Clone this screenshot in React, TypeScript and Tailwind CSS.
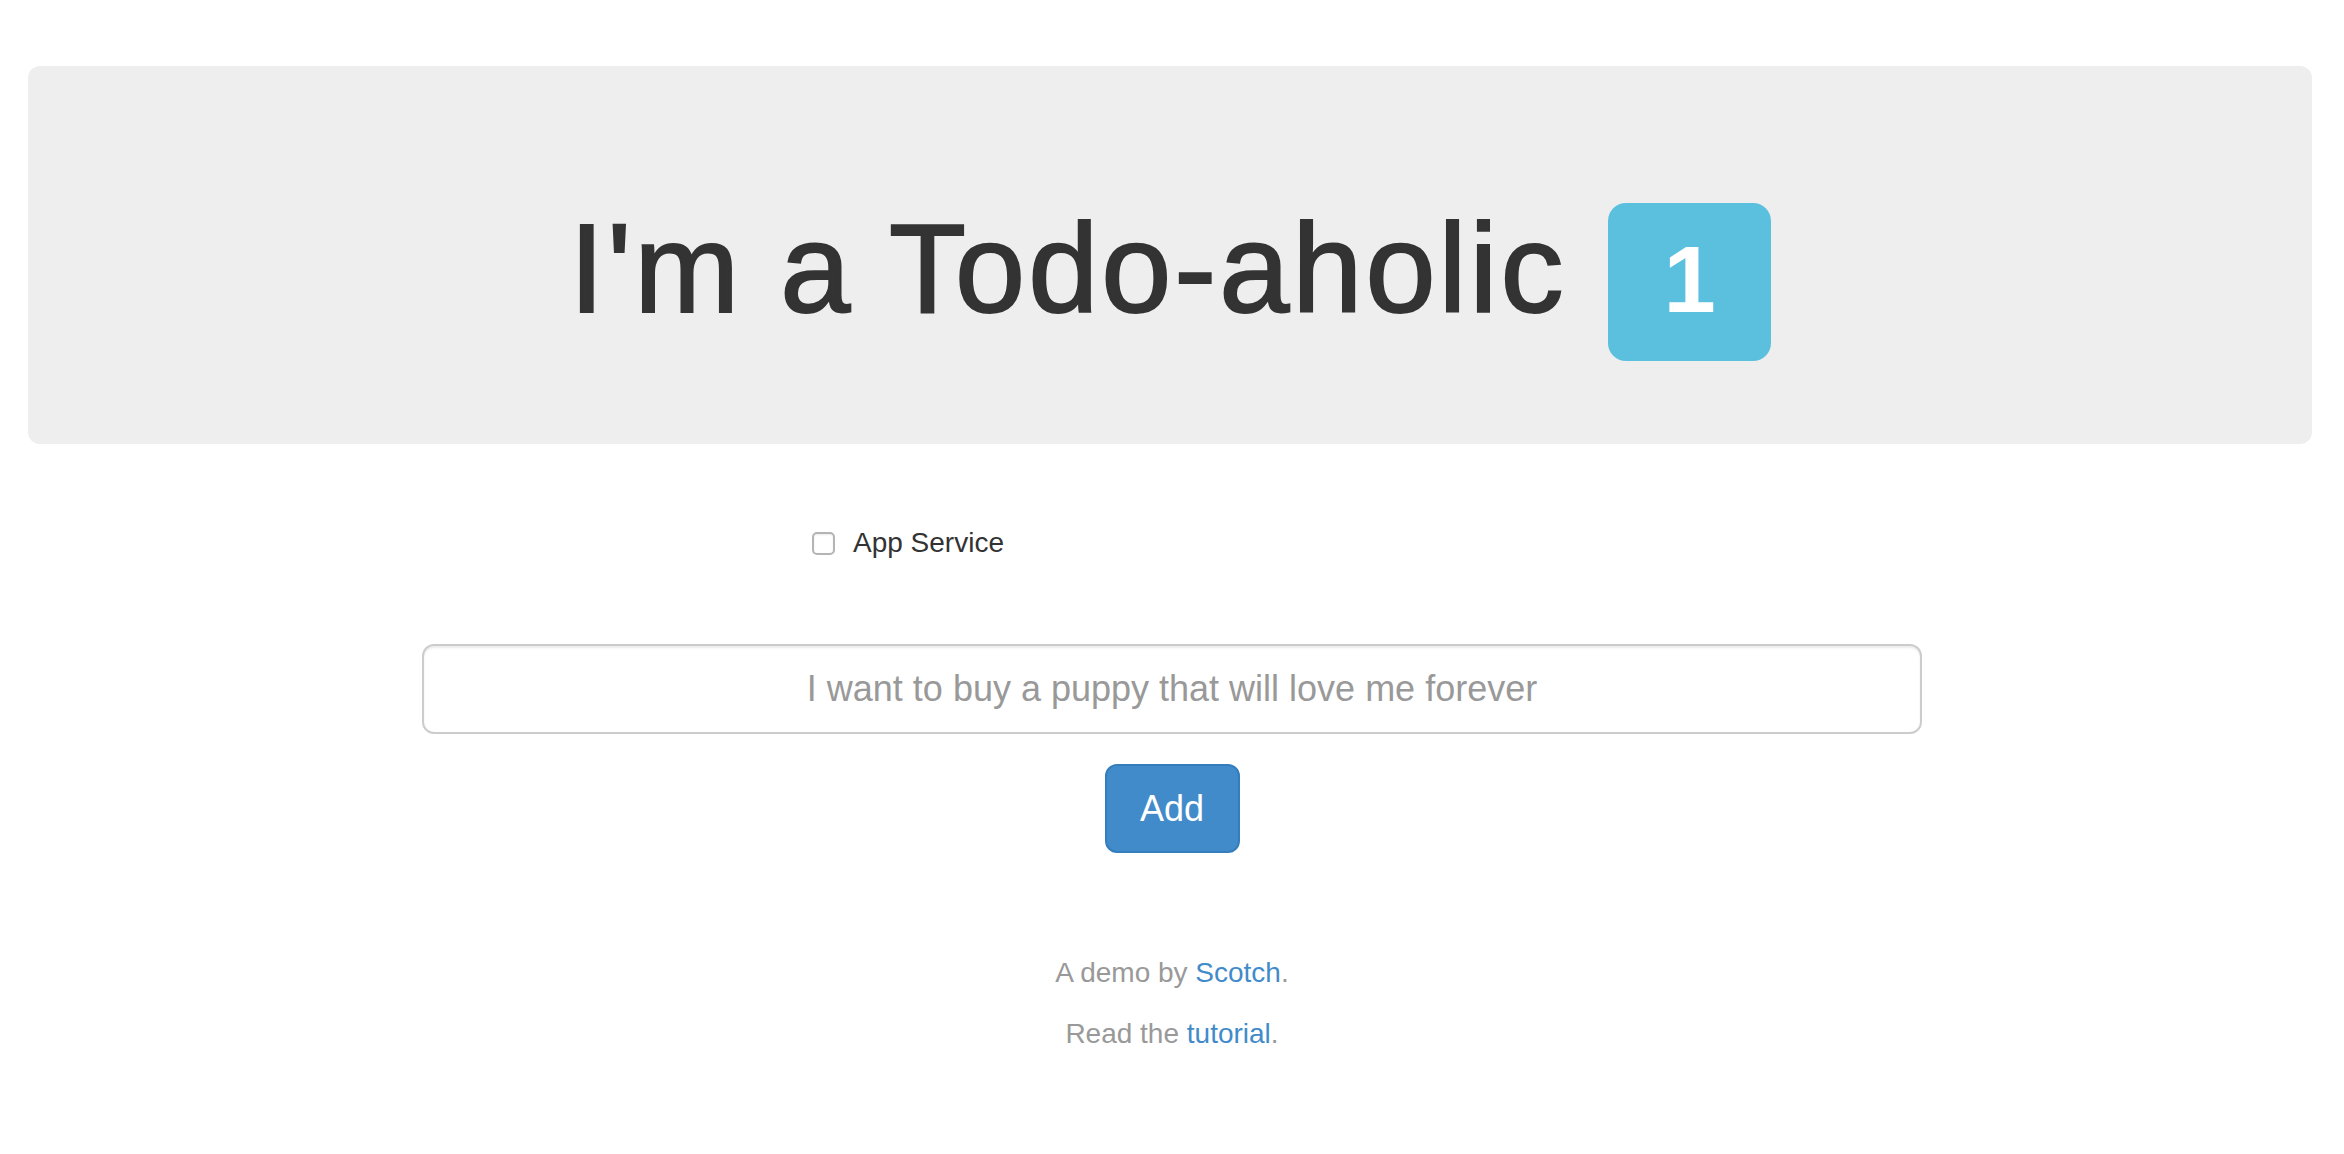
export default function App() {
  const font = { fontFamily: '"Liberation Sans", Arial, Helvetica, sans-serif' }

  return (
    <div className="min-h-screen bg-white text-[#333]" style={font}>
      <div className="pt-[66px]">
        <div className="ml-[28px] mr-[32px] h-[378px] rounded-[12px] bg-[#eee] pt-[133px]">
          <h1 className="flex items-baseline justify-center text-[126px] leading-[139px] font-normal text-[#333]">
            <span className="tracking-[3px] [-webkit-text-stroke:2px_#333]">I'm a Todo-aholic</span>
            <span className="ml-[42px] inline-block rounded-[18px] bg-[#5bc0de] px-[55px] pt-[30px] pb-[34px] text-[94px] leading-[94px] font-bold text-white">
              1
            </span>
          </h1>
        </div>
      </div>

      <div className="mx-auto mt-[79px] w-[720px]">
        <label className="flex h-[40px] items-center gap-[18px] text-[28px] leading-[40px] text-[#333]">
          <span className="block h-[23px] w-[23px] rounded-[5px] border-2 border-[#b4b4b4] bg-white shadow-[inset_0_1px_2px_rgba(0,0,0,0.08)]" />
          App Service
        </label>
      </div>

      <div className="mx-auto mt-[81px] flex w-[1500px] flex-col items-center">
        <input
          type="text"
          placeholder="I want to buy a puppy that will love me forever"
          className="h-[90px] w-full rounded-[12px] border-2 border-[#ccc] bg-white px-[32px] text-center text-[36px] text-[#555] placeholder:text-[#999] shadow-[inset_0_2px_2px_rgba(0,0,0,0.075)] outline-none"
          style={font}
        />
        <button
          className="mt-[30px] h-[89px] w-[135px] rounded-[12px] border-2 border-[#357ebd] bg-[#428bca] text-[36px] text-white"
          style={font}
        >
          Add
        </button>
      </div>

      <div className="mt-[100px] text-center text-[28px] leading-[40px] text-[#999]">
        <p className="mb-[21px]">
          A demo by <a className="text-[#428bca]">Scotch</a>.
        </p>
        <p>
          Read the <a className="text-[#428bca]">tutorial</a>.
        </p>
      </div>
    </div>
  )
}
